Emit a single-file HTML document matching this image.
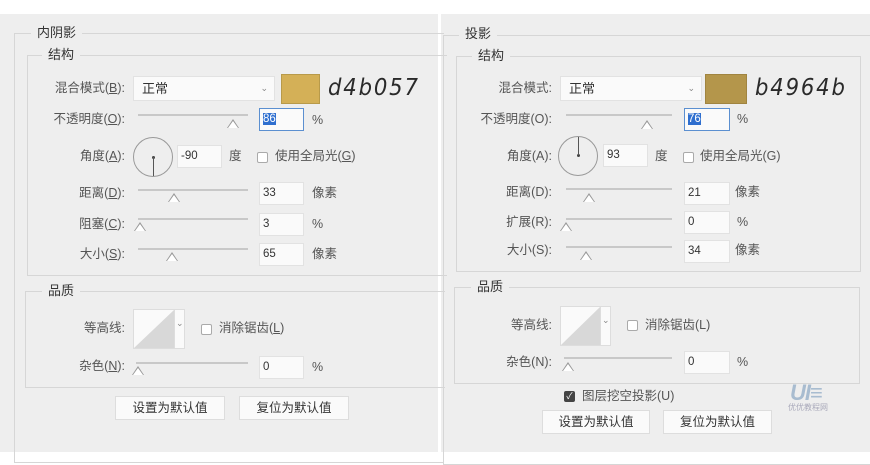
<!DOCTYPE html>
<html><head><meta charset="utf-8"><style>
*{margin:0;padding:0;box-sizing:border-box}
body{width:870px;height:452px;background:#fff;position:relative;overflow:hidden;font-family:"Liberation Sans","Noto Sans CJK SC",sans-serif;font-size:12.5px;color:#444}
.a{position:absolute}
.p{background:#eeeeee}
.g{position:absolute;border:1px solid #d6d6d6}
.lg{position:absolute;background:#eeeeee;padding:0 6px;color:#333;font-size:13px;line-height:16px}
.lb{position:absolute;text-align:right;width:120px;line-height:18px;color:#555}
.in{position:absolute;background:#fafafa;border:1px solid #e2e2e2;height:23px;line-height:21px;padding-left:3px;font-size:11.5px;color:#333}
.sl{position:absolute;height:2px;background:#c8c8c8}
.th{position:absolute;width:0;height:0}
.th:before{content:"";position:absolute;left:-6px;top:0;border-left:6px solid transparent;border-right:6px solid transparent;border-bottom:9px solid #999}
.th:after{content:"";position:absolute;left:-5px;top:1.5px;border-left:5px solid transparent;border-right:5px solid transparent;border-bottom:7px solid #fff}
.u{position:absolute;line-height:18px;color:#555}
.cb{position:absolute;width:11px;height:11px;border:1px solid #aaa;background:#fff;border-radius:2px}
.btn{position:absolute;background:#fafafa;border:1px solid #ddd;height:24px;line-height:22px;text-align:center;color:#333}
.hand{position:absolute;font-family:"DejaVu Sans","Liberation Sans",sans-serif;font-style:oblique;font-size:23px;color:#2a2a2a;letter-spacing:2px;transform:scaleX(0.92);transform-origin:left}
</style></head><body>
<div class="a p" style="left:0;top:14px;width:438px;height:438px"></div>
<div class="a p" style="left:441px;top:14px;width:429px;height:438px"></div>

<!-- LEFT -->
<div class="g" style="left:14px;top:33px;width:430px;height:430px;border-right:none"></div>
<div class="lg" style="left:31px;top:25px">内阴影</div>
<div class="g" style="left:27px;top:55px;width:420px;height:221px;border-right:none"></div>
<div class="lg" style="left:42px;top:47px">结构</div>
<div class="lb" style="left:5px;top:79px">混合模式(<u>B</u>):</div>
<div class="in" style="left:133px;top:76px;width:142px;height:25px;line-height:23px;font-size:13px;padding-left:8px">正常<span style="position:absolute;right:6px;top:0;font-size:9px;color:#888">⌄</span></div>
<div class="a" style="left:281px;top:74px;width:39px;height:30px;background:#d4b057;border:1px solid #b89a4a"></div>
<div class="hand" style="left:328px;top:75px">d4b057</div>

<div class="lb" style="left:5px;top:110px">不透明度(<u>O</u>):</div>
<div class="sl" style="left:138px;top:114px;width:110px"></div><div class="th" style="left:233px;top:119px"></div>
<div class="in" style="left:259px;top:108px;width:45px;border-color:#5b8fd0"><span style="background:#2f6fcf;color:#fff">86</span></div>
<div class="u" style="left:312px;top:111px">%</div>

<div class="lb" style="left:5px;top:147px">角度(<u>A</u>):</div>
<div class="a" style="left:133px;top:137px;width:40px;height:40px;border:1px solid #999;border-radius:50%"></div>
<div class="a" style="left:152px;top:156px;width:3px;height:3px;background:#444;border-radius:50%"></div>
<div class="a" style="left:153px;top:157px;width:1px;height:19px;background:#555"></div>
<div class="in" style="left:177px;top:145px;width:45px">-90</div>
<div class="u" style="left:229px;top:147px">度</div>
<div class="cb" style="left:257px;top:152px"></div>
<div class="u" style="left:275px;top:147px">使用全局光(<u>G</u>)</div>

<div class="lb" style="left:5px;top:184px">距离(<u>D</u>):</div>
<div class="sl" style="left:138px;top:189px;width:110px"></div><div class="th" style="left:174px;top:193px"></div>
<div class="in" style="left:259px;top:182px;width:45px">33</div><div class="u" style="left:312px;top:184px">像素</div>

<div class="lb" style="left:5px;top:215px">阻塞(<u>C</u>):</div>
<div class="sl" style="left:138px;top:218px;width:110px"></div><div class="th" style="left:140px;top:222px"></div>
<div class="in" style="left:259px;top:213px;width:45px">3</div><div class="u" style="left:312px;top:215px">%</div>

<div class="lb" style="left:5px;top:245px">大小(<u>S</u>):</div>
<div class="sl" style="left:138px;top:248px;width:110px"></div><div class="th" style="left:172px;top:252px"></div>
<div class="in" style="left:259px;top:243px;width:45px">65</div><div class="u" style="left:312px;top:245px">像素</div>

<div class="g" style="left:25px;top:291px;width:420px;height:97px;border-right:none"></div>
<div class="lg" style="left:42px;top:283px">品质</div>
<div class="lb" style="left:5px;top:319px">等高线:</div>
<div class="a" style="left:133px;top:309px;width:52px;height:40px;background:#fafafa;border:1px solid #ddd"></div>
<svg class="a" style="left:134px;top:310px" width="40" height="38"><polygon points="0,38 40,0 40,38" fill="#d8d8d8"/></svg>
<div class="a" style="left:174px;top:310px;width:1px;height:38px;background:#ddd"></div>
<div class="a" style="left:176px;top:318px;font-size:9px;color:#888">⌄</div>
<div class="cb" style="left:201px;top:324px"></div>
<div class="u" style="left:219px;top:319px">消除锯齿(<u>L</u>)</div>
<div class="lb" style="left:5px;top:357px">杂色(<u>N</u>):</div>
<div class="sl" style="left:136px;top:362px;width:112px"></div><div class="th" style="left:138px;top:366px"></div>
<div class="in" style="left:259px;top:356px;width:45px">0</div><div class="u" style="left:312px;top:358px">%</div>

<div class="btn" style="left:115px;top:396px;width:110px">设置为默认值</div>
<div class="btn" style="left:239px;top:396px;width:110px">复位为默认值</div>

<!-- RIGHT -->
<div class="g" style="left:443px;top:35px;width:440px;height:430px"></div>
<div class="lg" style="left:459px;top:26px">投影</div>
<div class="g" style="left:456px;top:56px;width:405px;height:216px"></div>
<div class="lg" style="left:472px;top:48px">结构</div>
<div class="lb" style="left:432px;top:79px">混合模式:</div>
<div class="in" style="left:560px;top:76px;width:142px;height:25px;line-height:23px;font-size:13px;padding-left:8px">正常<span style="position:absolute;right:6px;top:0;font-size:9px;color:#888">⌄</span></div>
<div class="a" style="left:705px;top:74px;width:42px;height:30px;background:#b4964b;border:1px solid #a08440"></div>
<div class="hand" style="left:755px;top:75px">b4964b</div>

<div class="lb" style="left:432px;top:110px">不透明度(O):</div>
<div class="sl" style="left:566px;top:114px;width:106px"></div><div class="th" style="left:647px;top:120px"></div>
<div class="in" style="left:684px;top:108px;width:46px;border-color:#5b8fd0"><span style="background:#2f6fcf;color:#fff">76</span></div>
<div class="u" style="left:737px;top:110px">%</div>

<div class="lb" style="left:432px;top:147px">角度(A):</div>
<div class="a" style="left:558px;top:136px;width:40px;height:40px;border:1px solid #999;border-radius:50%"></div>
<div class="a" style="left:577px;top:154px;width:3px;height:3px;background:#444;border-radius:50%"></div>
<div class="a" style="left:578px;top:137px;width:1px;height:18px;background:#555"></div>
<div class="in" style="left:603px;top:144px;width:45px">93</div>
<div class="u" style="left:655px;top:147px">度</div>
<div class="cb" style="left:683px;top:152px"></div>
<div class="u" style="left:700px;top:147px">使用全局光(G)</div>

<div class="lb" style="left:432px;top:183px">距离(D):</div>
<div class="sl" style="left:566px;top:188px;width:106px"></div><div class="th" style="left:589px;top:193px"></div>
<div class="in" style="left:684px;top:182px;width:46px">21</div><div class="u" style="left:735px;top:183px">像素</div>

<div class="lb" style="left:432px;top:213px">扩展(R):</div>
<div class="sl" style="left:566px;top:218px;width:106px"></div><div class="th" style="left:566px;top:222px"></div>
<div class="in" style="left:684px;top:211px;width:46px">0</div><div class="u" style="left:737px;top:213px">%</div>

<div class="lb" style="left:432px;top:241px">大小(S):</div>
<div class="sl" style="left:566px;top:246px;width:106px"></div><div class="th" style="left:586px;top:251px"></div>
<div class="in" style="left:684px;top:240px;width:46px">34</div><div class="u" style="left:735px;top:241px">像素</div>

<div class="g" style="left:454px;top:287px;width:406px;height:97px"></div>
<div class="lg" style="left:471px;top:279px">品质</div>
<div class="lb" style="left:432px;top:316px">等高线:</div>
<div class="a" style="left:560px;top:306px;width:51px;height:40px;background:#fafafa;border:1px solid #ddd"></div>
<svg class="a" style="left:561px;top:307px" width="39" height="38"><polygon points="0,38 39,0 39,38" fill="#d8d8d8"/></svg>
<div class="a" style="left:600px;top:307px;width:1px;height:38px;background:#ddd"></div>
<div class="a" style="left:602px;top:315px;font-size:9px;color:#888">⌄</div>
<div class="cb" style="left:627px;top:320px"></div>
<div class="u" style="left:645px;top:316px">消除锯齿(L)</div>
<div class="lb" style="left:432px;top:353px">杂色(N):</div>
<div class="sl" style="left:564px;top:357px;width:108px"></div><div class="th" style="left:568px;top:362px"></div>
<div class="in" style="left:684px;top:351px;width:46px">0</div><div class="u" style="left:737px;top:353px">%</div>

<div class="a" style="left:564px;top:391px;width:11px;height:11px;background:#444;border-radius:2px;color:#fff;font-size:9px;line-height:11px;text-align:center">✓</div>
<div class="u" style="left:582px;top:387px">图层挖空投影(U)</div>
<div class="btn" style="left:542px;top:410px;width:108px">设置为默认值</div>
<div class="btn" style="left:663px;top:410px;width:109px">复位为默认值</div>

<div class="a" style="left:790px;top:383px;width:52px;height:20px;font-family:'Liberation Sans',sans-serif;font-weight:bold;font-style:italic;font-size:22px;line-height:20px;color:#a8bcd0;letter-spacing:-1px">UI≡</div>
<div class="a" style="left:788px;top:402px;font-size:8px;color:#aab">优优教程网</div>
</body></html>
